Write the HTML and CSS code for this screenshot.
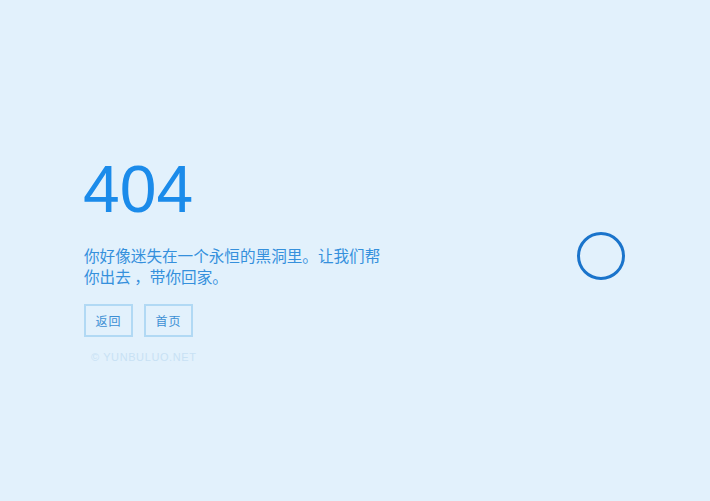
FILE: index.html
```html
<!DOCTYPE html>
<html lang="zh">
<head>
<meta charset="utf-8">
<title>404</title>
<link rel="stylesheet" href="styles.css">
</head>
<body>
<div class="page">
  <div class="content">
    <h1 class="code">404</h1>
    <p class="msg">你好像迷失在一个永恒的黑洞里。让我们帮你出去 ，带你回家。</p>
    <div class="actions">
      <a class="btn" href="#">返回</a>
      <a class="btn" href="#">首页</a>
    </div>
    <div class="copy">© YUNBULUO.NET</div>
  </div>
  <div class="hole"></div>
</div>
</body>
</html>
```
FILE: styles.css
```css
html, body {
  margin: 0;
  padding: 0;
  height: 100%;
}
body {
  background: #e2f1fc;
  font-family: "Liberation Sans", "Noto Sans CJK SC", sans-serif;
}
.page {
  position: relative;
  width: 710px;
  height: 501px;
  overflow: hidden;
}
.content {
  padding: 149px 0 0 84px;
  display: flex;
  flex-direction: column;
  align-items: flex-start;
}
.code {
  margin: 0;
  font-weight: normal;
  font-size: 66px;
  line-height: 80px;
  color: #1b8bea;
  margin-left: -1px;
}
.msg {
  margin: 16px 0 0 0;
  width: 300px;
  font-size: 15.6px;
  line-height: 21px;
  color: #3590dc;
  font-family: "Noto Sans CJK SC", sans-serif;
}
.actions {
  display: flex;
  gap: 11px;
  margin-top: 17px;
}
.btn {
  display: flex;
  align-items: center;
  justify-content: center;
  width: 45px;
  height: 29px;
  border: 2px solid #b1d9f4;
  color: #3c8fd4;
  font-size: 12px;
  text-decoration: none;
  font-family: "Noto Sans CJK SC", sans-serif;
  letter-spacing: 1px;
}
.copy {
  margin: 14px 0 0 7px;
  font-size: 11px;
  letter-spacing: 0.6px;
  color: #c8e1f4;
}
.hole {
  position: absolute;
  left: 577px;
  top: 232px;
  width: 42px;
  height: 42px;
  border: 3px solid #1a74cb;
  border-radius: 50%;
}
```
